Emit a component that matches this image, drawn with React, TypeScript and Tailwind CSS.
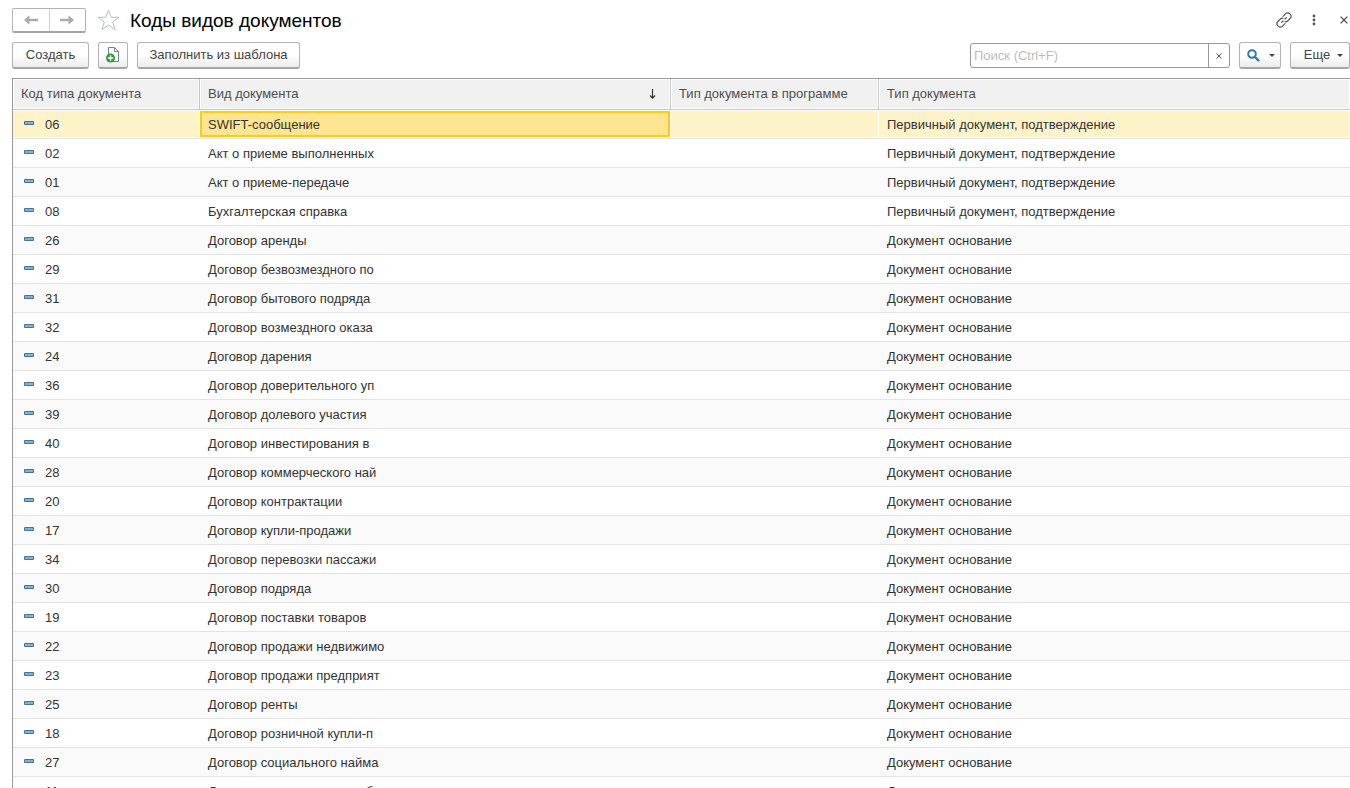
import { useState } from 'react';

interface DocumentKind {
  code: string;
  name: string;
  type: string;
}

const PRIMARY = 'Первичный документ, подтверждение';
const BASIS = 'Документ основание';

const documentKinds: DocumentKind[] = [
  { code: '06', name: 'SWIFT-сообщение', type: PRIMARY },
  { code: '02', name: 'Акт о приеме выполненных', type: PRIMARY },
  { code: '01', name: 'Акт о приеме-передаче', type: PRIMARY },
  { code: '08', name: 'Бухгалтерская справка', type: PRIMARY },
  { code: '26', name: 'Договор аренды', type: BASIS },
  { code: '29', name: 'Договор безвозмездного по', type: BASIS },
  { code: '31', name: 'Договор бытового подряда', type: BASIS },
  { code: '32', name: 'Договор возмездного оказа', type: BASIS },
  { code: '24', name: 'Договор дарения', type: BASIS },
  { code: '36', name: 'Договор доверительного уп', type: BASIS },
  { code: '39', name: 'Договор долевого участия', type: BASIS },
  { code: '40', name: 'Договор инвестирования в', type: BASIS },
  { code: '28', name: 'Договор коммерческого най', type: BASIS },
  { code: '20', name: 'Договор контрактации', type: BASIS },
  { code: '17', name: 'Договор купли-продажи', type: BASIS },
  { code: '34', name: 'Договор перевозки пассажи', type: BASIS },
  { code: '30', name: 'Договор подряда', type: BASIS },
  { code: '19', name: 'Договор поставки товаров', type: BASIS },
  { code: '22', name: 'Договор продажи недвижимо', type: BASIS },
  { code: '23', name: 'Договор продажи предприят', type: BASIS },
  { code: '25', name: 'Договор ренты', type: BASIS },
  { code: '18', name: 'Договор розничной купли-п', type: BASIS },
  { code: '27', name: 'Договор социального найма', type: BASIS },
  { code: '11', name: 'Договор сопровождения об', type: BASIS },
];

const buttonClass =
  'flex h-[27px] shrink-0 items-center justify-center rounded-[3px] border border-[#b3b3b3] border-b-2 border-b-[#a6a6a6] bg-gradient-to-b from-white from-50% to-[#ececec] text-[#444]';

function ArrowIcon({ back = false }: { back?: boolean }) {
  return (
    <svg width="14" height="10" viewBox="0 0 14 10" className={back ? '' : 'rotate-180'} aria-hidden="true">
      <path d="M0 5 5.500 .2v3.600H14v2.400H5.500v3.600z" fill="#acacac" />
    </svg>
  );
}

function Caret() {
  return (
    <svg width="6" height="3" viewBox="0 0 6 3" aria-hidden="true">
      <path d="M0 0h6L3 3z" fill="#444" />
    </svg>
  );
}

function CrossIcon({ size }: { size: number }) {
  return (
    <svg width={size} height={size} viewBox="0 0 8 8" aria-hidden="true">
      <path d="m.6.6 6.8 6.8M7.4.6.6 7.4" stroke="#444" strokeWidth="1.2" />
    </svg>
  );
}

function TitleBar() {
  return (
    <header className="flex h-6 items-center pl-3">
      <div className="flex h-[25px] w-[74px] rounded-[2px] border border-[#b3b3b3] border-b-2 border-b-[#a6a6a6] bg-white">
        <button type="button" aria-label="Назад" className="flex flex-1 items-center justify-center border-r border-[#cfcfcf]">
          <ArrowIcon back />
        </button>
        <button type="button" aria-label="Вперед" className="flex flex-1 items-center justify-center">
          <ArrowIcon />
        </button>
      </div>
      <button type="button" aria-label="В избранное" className="ml-[11px]">
        <svg width="23" height="22" viewBox="0 0 23 22" fill="none" stroke="#b9bec3" aria-hidden="true">
          <path d="m11.500 1 2.600 7.300h7.900l-6.300 4.700 2.400 7.600-6.600-4.600-6.600 4.600L7.300 13 1 8.300h7.900z" />
        </svg>
      </button>
      <h1 className="ml-[10px] flex-1 pt-px text-[19px] leading-6 text-black">Коды видов документов</h1>
      <button type="button" aria-label="Получить ссылку">
        <svg width="16" height="16" viewBox="0 0 16 16" fill="none" stroke="#555" strokeWidth="1.2" strokeLinecap="round" aria-hidden="true">
          <path d="M7 4.400 9.700 1.700a2.700 2.700 0 0 1 3.900 0l.7.700a2.700 2.700 0 0 1 0 3.900l-2.700 2.700a2.700 2.700 0 0 1-2.600.7" />
          <path d="M9 11.600 6.300 14.300a2.700 2.700 0 0 1-3.900 0l-.7-.700a2.700 2.700 0 0 1 0-3.900L4.400 7A2.700 2.700 0 0 1 7 6.300" />
          <path d="m5.600 10.400 1.400-1.400M9 7l1.400-1.400" />
        </svg>
      </button>
      <button type="button" aria-label="Дополнительно" className="ml-5">
        <svg width="4" height="12" viewBox="0 0 4 12" fill="#555" aria-hidden="true">
          <circle cx="2" cy="2" r="1.400" />
          <circle cx="2" cy="6" r="1.400" />
          <circle cx="2" cy="10" r="1.400" />
        </svg>
      </button>
      <button type="button" aria-label="Закрыть" className="mr-[2px] ml-6">
        <CrossIcon size={8} />
      </button>
    </header>
  );
}

function Toolbar() {
  const [search, setSearch] = useState('');

  return (
    <div className="mt-[10px] flex h-[27px] items-center pl-3">
      <button type="button" className={`${buttonClass} w-[77px]`}>Создать</button>
      <button type="button" aria-label="Создать по образцу" className={`${buttonClass} ml-[9px] w-[30px]`}>
        <svg width="14" height="16" viewBox="0 0 14 16" aria-hidden="true">
          <path d="M2.500 8V.500h6l4 4v10H7" fill="#fff" stroke="#6b8299" />
          <path d="M8.500.500v4h4" fill="none" stroke="#6b8299" />
          <circle cx="4.500" cy="11" r="4.500" fill="#2a9d36" />
          <path d="M4.500 8.200v5.600M1.700 11h5.600" stroke="#fff" strokeWidth="1.400" />
        </svg>
      </button>
      <button type="button" className={`${buttonClass} ml-[9px] w-[163px]`}>Заполнить из шаблона</button>

      <div className="ml-auto flex h-[25px] w-[260px] rounded-[3px] border border-[#999] bg-white">
        <input
          type="text"
          aria-label="Поиск"
          placeholder="Поиск (Ctrl+F)"
          value={search}
          onChange={(e) => setSearch(e.target.value)}
          className="min-w-0 flex-1 px-[3px] outline-none placeholder:text-[#bdbdbd]"
        />
        <button
          type="button"
          aria-label="Очистить"
          onClick={() => setSearch('')}
          className="flex w-[21px] items-center justify-center border-l border-[#999]"
        >
          <CrossIcon size={6} />
        </button>
      </div>
      <button type="button" aria-label="Найти" className={`${buttonClass} ml-[9px] w-[42px] gap-[9px] pl-[2px]`}>
        <svg width="13" height="13" viewBox="0 0 13 13" fill="none" stroke="#2f78ae" aria-hidden="true">
          <circle cx="5" cy="5" r="3.800" strokeWidth="2" />
          <path d="m8 8 4 4" strokeWidth="2.400" />
        </svg>
        <Caret />
      </button>
      <button type="button" className={`${buttonClass} ml-[9px] w-[60px] gap-[7px] pl-[7px]`}>
        Еще
        <Caret />
      </button>
    </div>
  );
}

function KindsTable() {
  const [selected, setSelected] = useState('06');
  const headClass = 'border-r border-b border-[#c6c6c6] px-2 text-left font-normal shadow-[inset_0_0_0_1px_#fff]';

  return (
    <table className="w-full table-fixed border-separate border-spacing-0 border-t border-l border-[#999]">
      <colgroup>
        <col className="w-[187px]" />
        <col className="w-[471px]" />
        <col className="w-[208px]" />
        <col />
      </colgroup>
      <thead>
        <tr className="h-[31px] bg-[#f1f1f1] text-[#4d4d4d]">
          <th className={headClass}>Код типа документа</th>
          <th className={headClass}>
            <div className="flex items-center justify-between">
              Вид документа
              <svg width="7" height="10" viewBox="0 0 7 10" className="mr-[6px]" aria-label="По возрастанию">
                <path d="M3.500 0v9M1 6.500l2.500 2.700L6 6.500" fill="none" stroke="#333" strokeWidth="1.200" />
              </svg>
            </div>
          </th>
          <th className={headClass}>Тип документа в программе</th>
          <th className="border-b border-[#c6c6c6] px-2 text-left font-normal shadow-[inset_0_0_0_1px_#fff]">Тип документа</th>
        </tr>
      </thead>
      <tbody className="text-[#333]">
        {documentKinds.map((kind) => {
          const active = kind.code === selected;
          const cell = `border-b border-[#e3e3e3] px-2 pt-[2px] whitespace-nowrap ${
            active ? 'bg-[#fef2c8] shadow-[inset_-1px_-1px_0_#fff,inset_0_1px_0_#fff]' : ''
          }`;
          return (
            <tr key={kind.code} onClick={() => setSelected(kind.code)} className="h-[29px] odd:bg-[#fafafa]">
              <td className={cell}>
                <div className="flex items-center">
                  <svg width="10" height="4" viewBox="0 0 10 4" className="mb-[4px] ml-[3px]" aria-hidden="true">
                    <path d="M.500.500h9v3h-9z" fill="#7fb2d6" stroke="#4b7391" />
                  </svg>
                  <span className="ml-[11px]">{kind.code}</span>
                </div>
              </td>
              <td
                className={
                  active
                    ? 'border-b border-[#e3e3e3] bg-[#ffe58f] px-2 pt-[2px] whitespace-nowrap shadow-[inset_0_1px_0_#fff,inset_-1px_-1px_0_#fff,inset_2px_0_0_#fbc91f,inset_-3px_-3px_0_#fbc91f,inset_0_3px_0_#fbc91f]'
                    : cell
                }
              >
                {kind.name}
              </td>
              <td className={cell} />
              <td className={cell}>{kind.type}</td>
            </tr>
          );
        })}
      </tbody>
    </table>
  );
}

export default function App() {
  return (
    <div className="h-screen overflow-hidden bg-white pt-2 font-['Liberation_Sans',Arial,sans-serif] text-[13px] leading-4">
      <TitleBar />
      <Toolbar />
      <main className="mt-[9px] pl-3">
        <KindsTable />
      </main>
    </div>
  );
}
